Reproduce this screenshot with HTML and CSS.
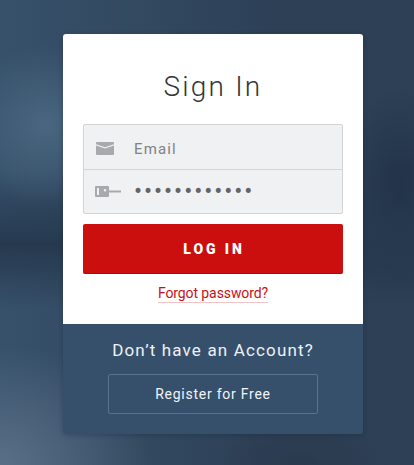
FILE: index.html
```html
<!DOCTYPE html>
<html lang="en">
<head>
<meta charset="utf-8">
<title>Sign In</title>
<link rel="stylesheet" href="styles.css">
</head>
<body>
<main class="card">
  <section class="card-main">
    <h1 class="title">Sign In</h1>
    <div class="fields">
      <div class="field field-email">
        <svg class="icon" width="18" height="13" viewBox="0 0 18 13"><path d="M1 0h16a1 1 0 0 1 1 1v1.200L9 5.200 0 2.200V1a1 1 0 0 1 1-1z" fill="#a7a9ac"/><path d="M0 3.600l9 3 9-3V12a1 1 0 0 1-1 1H1a1 1 0 0 1-1-1z" fill="#a7a9ac"/></svg>
        <span class="placeholder">Email</span>
      </div>
      <div class="field field-pass">
        <svg class="icon" width="26" height="11" viewBox="0 0 26 11"><path fill-rule="evenodd" d="M1 0h12a1 1 0 0 1 1 1v9a1 1 0 0 1-1 1H1a1 1 0 0 1-1-1V1a1 1 0 0 1 1-1zm1 2v7h2V2zm8 1a1.300 1.300 0 1 0 0 2.600a1.300 1.300 0 0 0 0-2.600z" fill="#a7a9ac"/><rect x="14" y="4.500" width="12" height="2" fill="#a7a9ac"/></svg>
        <span class="dots">••••••••••••</span>
      </div>
    </div>
    <button class="login" type="button">LOG IN</button>
    <div class="forgot-row"><a class="forgot" href="#">Forgot password?</a></div>
  </section>
  <section class="card-foot">
    <p class="foot-text">Don’t have an Account?</p>
    <a class="register" href="#">Register for Free</a>
  </section>
</main>
</body>
</html>
```
FILE: styles.css
```css
* { box-sizing: border-box; }
html, body { height: 100%; }
body {
  margin: 0;
  overflow: hidden;
  font-family: "Roboto", "Liberation Sans", sans-serif;
  background-color: #2f4258;
  background-image:
    radial-gradient(ellipse 150px 120px at 0 465px, #5a6f87 0%, rgba(90,111,135,0) 100%),
    radial-gradient(ellipse 85px 80px at 45px 125px, #4a6680 0%, rgba(74,102,128,0) 100%),
    linear-gradient(180deg, rgba(36,56,79,0) 170px, #26394f 245px, rgba(50,68,88,0) 310px),
    radial-gradient(ellipse 60px 110px at 400px 195px, #213247 0%, rgba(33,50,71,0) 100%),
    radial-gradient(ellipse 90px 50px at 300px 465px, #2b3a4e 0%, rgba(43,58,78,0) 100%),
    linear-gradient(90deg, #37516b 0%, #32495f 35%, #2d4057 65%, #2d4055 100%);
  padding: 34px 0 0 63px;
}
.card {
  width: 300px;
  height: 400px;
  display: flex;
  flex-direction: column;
  border-radius: 3px;
  overflow: hidden;
  box-shadow: 0 1px 5px rgba(20, 30, 45, 0.3);
}
.card-main {
  height: 290px;
  background: #fff;
  padding: 0 20px;
  display: flex;
  flex-direction: column;
}
.title {
  margin: 34px 0 0;
  height: 56px;
  font-size: 28px;
  line-height: 38px;
  font-weight: 300;
  letter-spacing: 2.2px;
  color: #33363a;
  text-align: center;
}
.fields {
  height: 90px;
  background: #f0f1f3;
  border: 1px solid #d3d4d6;
  border-radius: 2px;
  display: flex;
  flex-direction: column;
}
.field {
  display: flex;
  align-items: center;
  position: relative;
  padding-left: 50px;
}
.field-email { height: 45px; border-bottom: 1px solid #d3d4d6; }
.field-pass { flex: 1; }
.icon { position: absolute; }
.field-email .icon { left: 12px; top: 17px; }
.field-pass .icon { left: 11px; top: 16px; }
.placeholder {
  font-size: 15px;
  letter-spacing: 1.1px;
  color: #808285;
  position: relative;
  top: 2px;
}
.dots {
  font-family: "DejaVu Sans", sans-serif;
  font-size: 17px;
  letter-spacing: 0;
  color: #636466;
  line-height: 1;
  margin-left: -1px;
}
.login {
  margin-top: 10px;
  height: 50px;
  width: 260px;
  border: 0;
  border-bottom: 1px solid #a50d0d;
  border-radius: 2px;
  background: #cb0e0e;
  color: #fff;
  font-family: inherit;
  font-size: 14px;
  font-weight: 900;
  letter-spacing: 2.9px;
  padding: 0 0 0 2px;
}
.forgot-row { margin-top: 10px; text-align: center; line-height: 18px; }
.forgot {
  font-size: 14px;
  letter-spacing: -0.1px;
  color: #c5121a;
  text-decoration: none;
  border-bottom: 1px solid #f0c4c4;
  display: inline-block;
  line-height: 17px;
}
.card-foot {
  flex: 1;
  background: #36506c;
  display: flex;
  flex-direction: column;
  align-items: center;
  padding-top: 15px;
}
.foot-text {
  margin: 0;
  font-size: 17px;
  line-height: 22px;
  letter-spacing: 1.15px;
  color: #eef1f4;
}
.register {
  margin-top: 13px;
  width: 210px;
  height: 40px;
  border: 1px solid #557291;
  border-radius: 2px;
  display: flex;
  align-items: center;
  justify-content: center;
  font-size: 14px;
  letter-spacing: 0.75px;
  color: #f2f4f6;
  text-decoration: none;
}
```
